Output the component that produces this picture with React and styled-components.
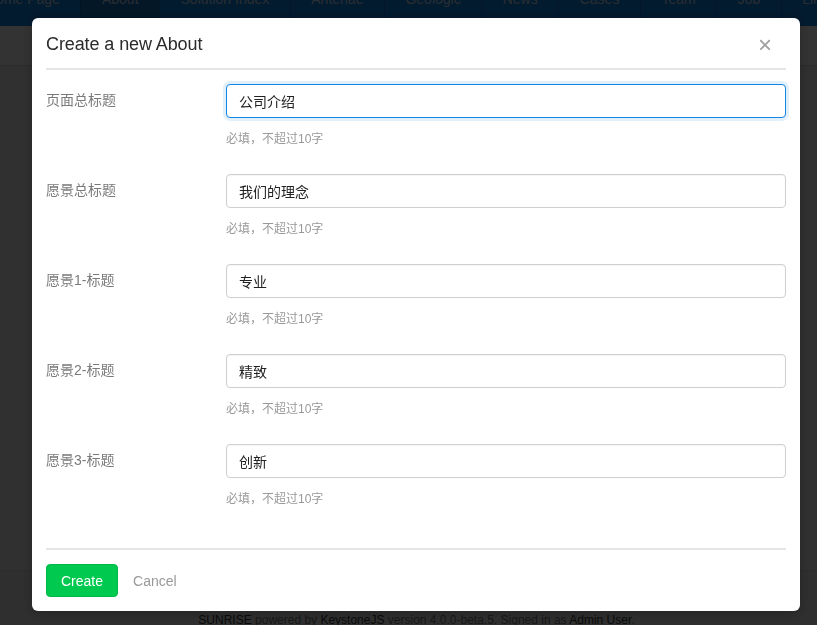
import React from 'react'
import styled, { createGlobalStyle } from 'styled-components'

const navItems = [
  { label: 'Home Page' },
  { label: 'About', active: true },
  { label: 'Solution Index' },
  { label: 'Antenae' },
  { label: 'Geologic' },
  { label: 'News' },
  { label: 'Cases' },
  { label: 'Team' },
  { label: 'Job' },
  { label: 'Links' },
]

const fields = [
  { label: '页面总标题', value: '公司介绍', focused: true },
  { label: '愿景总标题', value: '我们的理念' },
  { label: '愿景1-标题', value: '专业' },
  { label: '愿景2-标题', value: '精致' },
  { label: '愿景3-标题', value: '创新' },
]

const GlobalStyle = createGlobalStyle`
  html, body {
    margin: 0;
    padding: 0;
    height: 100%;
    overflow: hidden;
  }
  body {
    font-family: "Liberation Sans", "Noto Sans CJK SC", Arial, sans-serif;
    font-size: 14px;
    color: #333;
    background: #f0f0f0;
  }
  * { box-sizing: border-box; }
`

const Page = styled.div`
  display: flex;
  flex-direction: column;
  height: 100vh;
  background: #f2f2f2;
`

const PrimaryNav = styled.nav`
  display: flex;
  height: 54px;
  margin-top: -28px;
  margin-left: -34.5px;
  background: #1385e5;
  flex-shrink: 0;
`

const NavItem = styled.div`
  display: flex;
  align-items: center;
  padding: 0 20.5px;
  color: rgba(255, 255, 255, 0.78);
  white-space: nowrap;
  border-left: ${p => (p.$first ? 'none' : '1px solid rgba(0, 0, 0, 0.12)')};
  background: ${p => (p.$active ? 'rgba(0, 0, 0, 0.14)' : 'transparent')};
`

const SecondaryNav = styled.div`
  height: 40px;
  background: #ffffff;
  border-bottom: 1px solid #d8d8d8;
  flex-shrink: 0;
`

const Main = styled.main`
  flex: 1;
  background: #f0f0f0;
  border-bottom: 1px solid #dcdcdc;
`

const Footer = styled.footer`
  height: 54px;
  padding: 41px 0 0 16px;
  text-align: center;
  font-size: 12px;
  line-height: 16px;
  color: #777;
  background: #e8e8e8;
  flex-shrink: 0;
`

const FooterLink = styled.span`
  color: #333;
`

const Overlay = styled.div`
  position: fixed;
  inset: 0;
  background: rgba(0, 0, 0, 0.8);
  display: flex;
  align-items: flex-start;
  padding: 18px 0 0 32px;
`

const Modal = styled.div`
  width: 768px;
  background: #fff;
  border-radius: 6px;
  padding: 0 14px;
  box-shadow: 0 2px 12px rgba(0, 0, 0, 0.25);
`

const ModalHeader = styled.div`
  display: flex;
  align-items: center;
  justify-content: space-between;
  height: 52px;
  padding-top: 3px;
  border-bottom: 2px solid #e5e5e5;
`

const Title = styled.h2`
  margin: 0;
  font-size: 18px;
  font-weight: normal;
  color: #2b2b2b;
  letter-spacing: -0.1px;
`

const Close = styled.button`
  border: none;
  background: none;
  padding: 0 14px 0 0;
  font-family: "Liberation Sans", Arial, sans-serif;
  font-size: 24px;
  line-height: 1;
  color: #a0a0a0;
  cursor: pointer;
`

const ModalBody = styled.div`
  padding: 14px 0 14px;
`

const Row = styled.div`
  display: grid;
  grid-template-columns: 180px 1fr;
  margin-bottom: 26px;
`

const Label = styled.label`
  line-height: 32px;
  color: #7a7a7a;
  font-size: 14px;
`

const Input = styled.input`
  width: 100%;
  height: 34px;
  padding: 0 12px;
  font-family: "Liberation Sans", "Noto Sans CJK SC", Arial, sans-serif;
  font-size: 14px;
  color: #222;
  border: 1px solid ${p => (p.$focused ? '#1385e5' : '#cfcfcf')};
  border-radius: 4px;
  outline: none;
  box-shadow: ${p => (p.$focused ? '0 0 0 3px rgba(19, 133, 229, 0.12)' : 'inset 0 1px 1px rgba(0,0,0,0.04)')};
`

const Help = styled.div`
  margin-top: 13px;
  font-size: 12px;
  line-height: 17px;
  color: #999;
`

const ModalFooter = styled.div`
  display: flex;
  align-items: center;
  gap: 14px;
  padding: 14px 0;
  border-top: 2px solid #e5e5e5;
`

const Button = styled.button`
  height: 33px;
  font-family: "Liberation Sans", Arial, sans-serif;
  font-size: 14px;
  border-radius: 4px;
  cursor: pointer;
  border: 1px solid ${p => (p.$primary ? '#00b848' : 'transparent')};
  background: ${p => (p.$primary ? '#00c94f' : 'transparent')};
  color: ${p => (p.$primary ? '#fff' : '#999')};
  padding: ${p => (p.$primary ? '0 14px' : '0')};
`

export default function App() {
  return (
    <>
      <GlobalStyle />
      <Page>
        <PrimaryNav>
          {navItems.map((item, i) => (
            <NavItem key={item.label} $first={i === 0} $active={item.active}>
              {item.label}
            </NavItem>
          ))}
        </PrimaryNav>
        <SecondaryNav />
        <Main />
        <Footer>
          <FooterLink>SUNRISE</FooterLink> powered by <FooterLink>KeystoneJS</FooterLink> version 4.0.0-beta.5. Signed in as <FooterLink>Admin User</FooterLink>.
        </Footer>
      </Page>
      <Overlay>
        <Modal>
          <ModalHeader>
            <Title>Create a new About</Title>
            <Close aria-label="Close">×</Close>
          </ModalHeader>
          <ModalBody>
            {fields.map(field => (
              <Row key={field.label}>
                <Label>{field.label}</Label>
                <div>
                  <Input defaultValue={field.value} $focused={field.focused} />
                  <Help>必填，不超过10字</Help>
                </div>
              </Row>
            ))}
          </ModalBody>
          <ModalFooter>
            <Button $primary>Create</Button>
            <Button>Cancel</Button>
          </ModalFooter>
        </Modal>
      </Overlay>
    </>
  )
}
